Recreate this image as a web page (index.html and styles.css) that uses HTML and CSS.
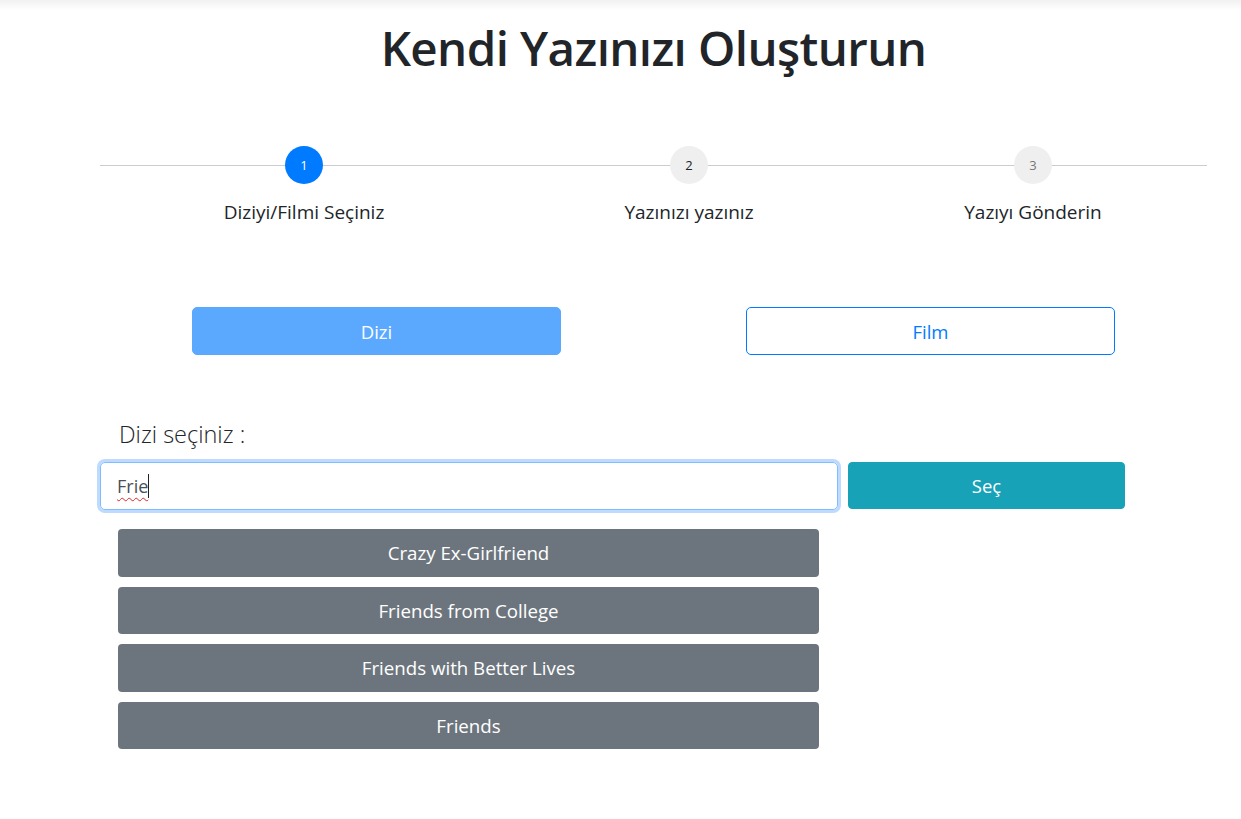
FILE: index.html
```html
<!DOCTYPE html>
<html lang="tr">
<head>
<meta charset="utf-8">
<title>Kendi Yazınızı Oluşturun</title>
<link rel="stylesheet" href="styles.css">
</head>
<body>
<div class="topshade"></div>
<main class="page">
  <h1 class="title">Kendi Yazınızı Oluşturun</h1>

  <div class="stepper">
    <div class="step">
      <span class="circle active">1</span>
      <span class="step-label">Diziyi/Filmi Seçiniz</span>
    </div>
    <div class="step">
      <span class="circle">2</span>
      <span class="step-label">Yazınızı yazınız</span>
    </div>
    <div class="step">
      <span class="circle muted">3</span>
      <span class="step-label">Yazıyı Gönderin</span>
    </div>
  </div>

  <div class="type-row">
    <button class="btn btn-dizi">Dizi</button>
    <button class="btn btn-film">Film</button>
  </div>

  <label class="field-label">Dizi seçiniz :</label>
  <div class="search-row">
    <div class="input focused"><span class="typed">Frie</span><span class="caret"></span></div>
    <button class="btn btn-sec">Seç</button>
  </div>

  <ul class="results">
    <li class="result">Crazy Ex-Girlfriend</li>
    <li class="result">Friends from College</li>
    <li class="result">Friends with Better Lives</li>
    <li class="result">Friends</li>
  </ul>
</main>
</body>
</html>
```

FILE: styles.css
```css
* { box-sizing: border-box; }

html, body {
  margin: 0;
  padding: 0;
  background: #fff;
}

body {
  font-family: "Open Sans", "Noto Sans", "Liberation Sans", sans-serif;
  color: #212529;
}

.topshade {
  height: 10px;
  background: linear-gradient(#f1f1f1, #ffffff);
}

.page {
  width: 1107px;
  margin-left: 100px;
}

.title {
  margin: 8px 0 0 0;
  font-size: 47.5px;
  line-height: 60px;
  font-weight: 600;
  text-align: center;
  letter-spacing: -0.6px;
  color: #212529;
}

.stepper {
  margin-top: 68px;
  display: grid;
  grid-template-columns: 408px 362px 326px;
  background: linear-gradient(#cccccc, #cccccc) no-repeat 0 19px / 100% 1px;
}

.step {
  display: flex;
  flex-direction: column;
  align-items: center;
}

.circle {
  width: 38px;
  height: 38px;
  border-radius: 50%;
  background: #efefef;
  color: #212529;
  font-size: 13px;
  display: flex;
  align-items: center;
  justify-content: center;
}

.circle.active {
  background: #007bff;
  color: #fff;
}

.circle.muted {
  color: #777;
}

.step-label {
  margin-top: 15px;
  font-size: 19px;
  line-height: 27px;
  color: #212529;
}

.type-row {
  margin-top: 81px;
  display: flex;
  padding-left: 92px;
  gap: 185px;
}

.btn {
  font-family: inherit;
  height: 48px;
  border-radius: 5px;
  font-size: 18.5px;
  cursor: pointer;
}

.btn-dizi {
  width: 369px;
  background: #5aa9ff;
  border: 1px solid #5aa9ff;
  color: #fff;
}

.btn-film {
  width: 369px;
  background: #fff;
  border: 1px solid #007bff;
  color: #007bff;
}

.field-label {
  display: block;
  margin: 65px 0 0 19px;
  font-size: 23.5px;
  line-height: 29px;
  font-weight: 300;
  color: #212529;
}

.search-row {
  margin-top: 13px;
  display: flex;
  gap: 10px;
}

.input {
  width: 738px;
  height: 48px;
  border: 1px solid #80bdff;
  border-radius: 5px;
  box-shadow: 0 0 0 3px #bedbff;
  padding: 0 16px;
  display: flex;
  align-items: center;
  font-size: 18px;
  color: #495057;
}

.typed {
  text-decoration: underline wavy #e0262a;
  text-decoration-thickness: 1px;
  text-underline-offset: 4px;
}

.caret {
  width: 1px;
  height: 24px;
  background: #222;
}

.btn-sec {
  width: 277px;
  height: 47px;
  background: #17a2b8;
  border: 1px solid #17a2b8;
  color: #fff;
  border-radius: 4px;
}

.results {
  list-style: none;
  margin: 19px 0 0 18px;
  padding: 0;
  width: 701px;
  display: flex;
  flex-direction: column;
  gap: 10px;
}

.result {
  height: 47.5px;
  background: #6c757d;
  color: #fff;
  border-radius: 4px;
  font-size: 18.7px;
  display: flex;
  align-items: center;
  justify-content: center;
}
```
